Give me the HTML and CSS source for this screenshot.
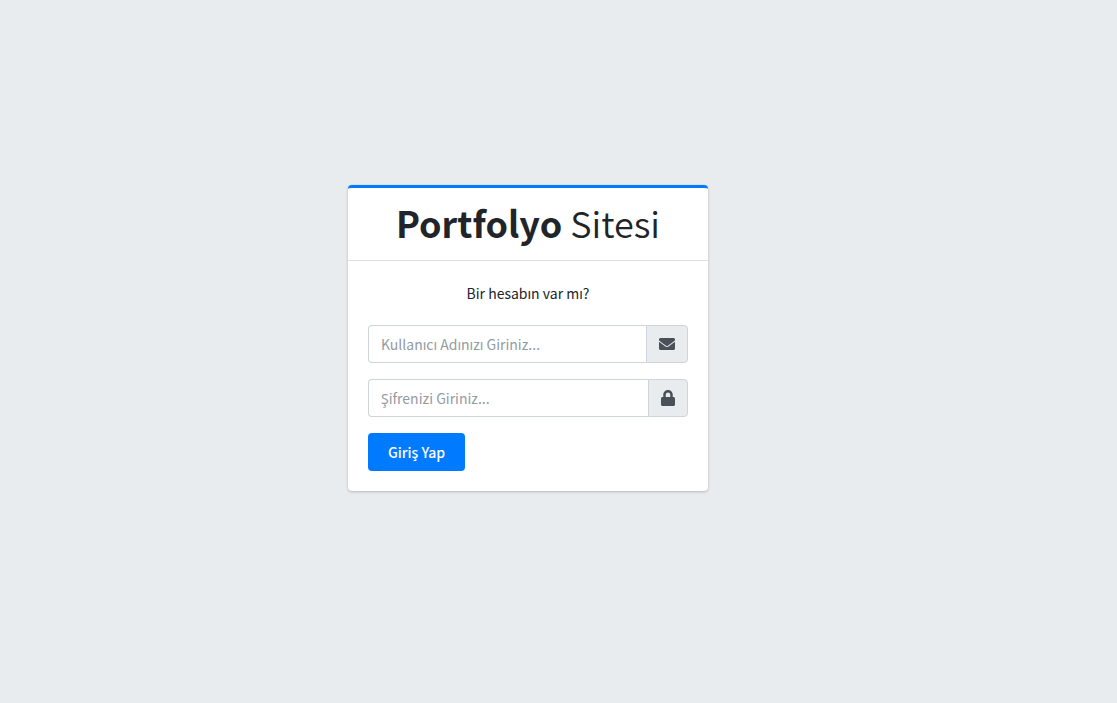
FILE: index.html
```html
<!DOCTYPE html>
<html lang="tr">
<head>
<meta charset="utf-8">
<meta name="viewport" content="width=device-width, initial-scale=1">
<title>Portfolyo Sitesi</title>
<link rel="stylesheet" href="styles.css">
</head>
<body class="login-page">
<main class="card">
  <header class="card-header">
    <h1 class="brand"><b>Portfolyo</b> Sitesi</h1>
  </header>
  <form class="card-body">
    <p class="message">Bir hesabın var mı?</p>
    <div class="input-group">
      <input class="field" id="user" type="text" placeholder="Kullanıcı Adınızı Giriniz...">
      <label class="addon" for="user" aria-label="Kullanıcı Adı">
        <svg class="icon-envelope" viewBox="0 0 512 512" aria-hidden="true"><path d="M502.3 190.8c3.9-3.1 9.7-.2 9.7 4.7V400c0 26.500-21.500 48-48 48H48c-26.500 0-48-21.500-48-48V195.600c0-5 5.700-7.800 9.700-4.700 22.400 17.400 52.100 39.500 154.100 113.600 21.100 15.400 56.700 47.800 92.200 47.600 35.700.3 72-32.800 92.300-47.600 102-74.100 131.600-96.300 154-113.700zM256 320c23.200.4 56.600-29.200 73.400-41.400 132.700-96.300 142.800-104.700 173.400-128.700 5.800-4.500 9.200-11.500 9.200-18.900v-19c0-26.500-21.500-48-48-48H48c-26.500 0-48 21.500-48 48v19c0 7.400 3.400 14.300 9.200 18.900 30.600 23.900 40.700 32.400 173.400 128.700 16.800 12.200 50.200 41.800 73.400 41.400z"/></svg>
      </label>
    </div>
    <div class="input-group">
      <input class="field" id="pass" type="password" placeholder="Şifrenizi Giriniz...">
      <label class="addon" for="pass" aria-label="Şifre">
        <svg class="icon-lock" viewBox="0 0 448 512" aria-hidden="true"><path d="M400 224h-24v-72C376 68.200 307.800 0 224 0S72 68.200 72 152v72H48c-26.500 0-48 21.500-48 48v192c0 26.500 21.500 48 48 48h352c26.500 0 48-21.500 48-48V272c0-26.500-21.500-48-48-48zm-104 0H152v-72c0-39.700 32.300-72 72-72s72 32.300 72 72v72z"/></svg>
      </label>
    </div>
    <button class="submit" type="submit">Giriş Yap</button>
  </form>
</main>
</body>
</html>
```
FILE: styles.css
```css
*, *::before, *::after { box-sizing: border-box; }

.login-page {
  margin: 0;
  min-height: 100vh;
  padding: 0 61px 27px 0;
  display: flex;
  align-items: center;
  justify-content: center;
  background: #e9ecef;
  color: #212529;
  font-family: "Source Sans Pro", "Noto Sans CJK SC", "Noto Sans", sans-serif;
  font-size: 14px;
  line-height: 24px;
}

.card {
  width: 100%;
  max-width: 360px;
  background: #fff;
  border-top: 3px solid #007bff;
  border-radius: 4px;
  box-shadow: 0 0 1px rgba(0, 0, 0, .13), 0 1px 3px rgba(0, 0, 0, .2);
}

.card-header {
  padding: 12px 20px 16px;
  border-bottom: 1px solid rgba(0, 0, 0, .125);
  text-align: center;
}

.brand {
  margin: 0;
  font-size: 36px;
  font-weight: 350;
  line-height: 44px;
}

.brand b { font-weight: 700; }

.card-body { padding: 20px; }

.message {
  margin: 0 0 20px;
  text-align: center;
}

.input-group {
  display: flex;
  height: 38px;
  margin-bottom: 16px;
}

.field {
  flex: 1;
  min-width: 0;
  padding: 6px 12px;
  border: 1px solid #ced4da;
  border-right: 0;
  border-radius: 4px 0 0 4px;
  background: #fff;
  color: #495057;
  font: inherit;
}

.field::placeholder { color: #939ba2; opacity: 1; }

.addon {
  display: flex;
  align-items: center;
  padding: 0 12px;
  border: 1px solid #ced4da;
  border-radius: 0 4px 4px 0;
  background: #e9ecef;
  color: #495057;
}

.icon-envelope, .icon-lock {
  display: block;
  height: 16px;
  fill: currentColor;
}

.icon-envelope { width: 16px; }
.icon-lock { width: 14px; }

.submit {
  display: block;
  height: 38px;
  padding: 0 20px;
  border: 0;
  border-radius: 4px;
  background: #007bff;
  color: #fff;
  font: inherit;
  font-weight: 500;
}
```
